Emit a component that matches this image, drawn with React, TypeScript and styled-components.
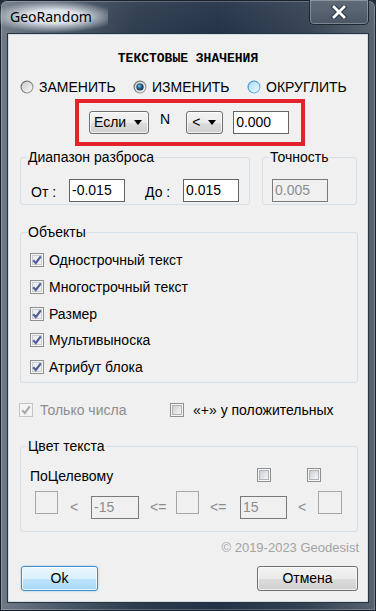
import React from "react";
import styled, { createGlobalStyle } from "styled-components";

const GlobalStyle = createGlobalStyle`
  html, body { margin: 0; padding: 0; background: #1f2b38; }
  body {
    width: 376px; height: 611px; overflow: hidden;
    font-family: "Liberation Sans", Arial, sans-serif;
  }
  * { box-sizing: border-box; }
`;

const Window = styled.div`
  width: 376px;
  height: 611px;
  display: flex;
  flex-direction: column;
  border-radius: 7px 7px 0 0;
  background:
    linear-gradient(180deg, rgba(255,255,255,0.06) 0%, rgba(0,0,0,0) 40px),
    linear-gradient(90deg, #6f7a86 0%, #4d5a69 16%, #2c3b4d 36%, #223146 58%, #344253 82%, #58636f 100%);
  box-shadow: inset 0 0 0 1px #18212c, inset 0 0 0 2px rgba(255,255,255,0.22);
`;

const TitleBar = styled.div`
  height: 34px;
  display: flex;
  align-items: flex-start;
  justify-content: space-between;
`;

const Title = styled.div`
  height: 32px;
  display: flex;
  align-items: center;
  padding: 0 16px 0 10px;
  font-family: "Noto Sans", "Open Sans", sans-serif;
  font-size: 14px;
  color: #000;
  background: radial-gradient(ellipse 60% 50% at 50% 52%, rgba(230,235,240,0.95) 40%, rgba(230,235,240,0) 100%);
`;

const CloseButton = styled.div`
  width: 60px;
  height: 25px;
  margin-right: 7px;
  display: flex;
  align-items: center;
  justify-content: center;
  border: 1px solid rgba(10, 16, 24, 0.75);
  border-top: none;
  border-radius: 0 0 5px 5px;
  background: linear-gradient(180deg, #5f6b78 0%, #56626f 50%, #4a5664 100%);
  box-shadow: inset 0 0 0 1px rgba(255,255,255,0.28);
`;

const Client = styled.div`
  margin: 0 8px 9px;
  height: 568px;
  background: #f0f0f0;
  border: 1px solid #d3dbe3;
  box-shadow: 0 0 0 1px #27323f;
  display: flex;
  flex-direction: column;
  color: #000;
  font-size: 14px;
`;

const Heading = styled.div`
  margin-top: 16px;
  line-height: 16px;
  text-align: center;
  font-family: "Liberation Mono", "DejaVu Sans Mono", monospace;
  font-weight: bold;
  font-size: 13px;
`;

const RadioRow = styled.div`
  margin-top: 11px;
  height: 18px;
  display: grid;
  grid-template-columns: 113px 114px auto;
  align-items: center;
  padding-left: 11px;
`;

const RadioItem = styled.label`
  display: flex;
  align-items: center;
  gap: 5px;
  line-height: 18px;
  white-space: nowrap;
`;

const Highlight = styled.div`
  margin: 3px 0 0 66px;
  width: 230px;
  height: 47px;
  border: 4px solid #e3222b;
  display: flex;
  align-items: center;
  padding-left: 10px;
`;

const ComboButton = styled.div<{ $w: number; $pl: number; $pr: number; $ml?: number }>`
  width: ${(p) => p.$w}px;
  height: 23px;
  margin-left: ${(p) => p.$ml ?? 0}px;
  padding: 0 ${(p) => p.$pr}px 1px ${(p) => p.$pl}px;
  display: flex;
  align-items: center;
  justify-content: space-between;
  border: 1px solid #707070;
  border-radius: 3px;
  background: linear-gradient(180deg, #f2f2f2 0%, #ebebeb 50%, #dddddd 50%, #cfcfcf 100%);
  box-shadow: inset 0 0 0 1px rgba(255,255,255,0.7);
  line-height: 16px;
`;

const Arrow = styled.span`
  width: 0;
  height: 0;
  border-left: 4px solid transparent;
  border-right: 4px solid transparent;
  border-top: 5px solid #000;
`;

const NLabel = styled.div`
  align-self: flex-start;
  margin: 8px 0 0 11px;
  line-height: 16px;
`;

const TextBox = styled.div<{ $w: number; $disabled?: boolean; $mt?: number; $ml?: number }>`
  width: ${(p) => p.$w}px;
  height: 23px;
  margin-top: ${(p) => p.$mt ?? 0}px;
  margin-left: ${(p) => p.$ml ?? 0}px;
  padding: 0 0 2px 2px;
  display: flex;
  align-items: center;
  border: 1px solid ${(p) => (p.$disabled ? "#7a7a7a" : "#646464")};
  background: ${(p) => (p.$disabled ? "#f0f0f0" : "#ffffff")};
  color: ${(p) => (p.$disabled ? "#8d8d8d" : "#000")};
  line-height: 16px;
`;

const GroupRow = styled.div`
  margin-top: 3px;
  display: flex;
  gap: 12px;
  padding-left: 11px;
`;

const Group = styled.fieldset<{ $w?: number; $mt?: number }>`
  margin: ${(p) => p.$mt ?? 0}px ${(p) => (p.$w ? 0 : 9)}px 0 ${(p) => (p.$w ? 0 : 11)}px;
  padding: 0;
  min-width: 0;
  ${(p) => (p.$w ? `width: ${p.$w}px;` : "")}
  border: 1px solid #d5dfe5;
  border-radius: 3px;
`;

const Legend = styled.legend`
  margin-left: 6px;
  padding: 0 1px;
  font-size: 14px;
  line-height: 16px;
`;

const FieldRow = styled.div<{ $pl: number }>`
  display: flex;
  align-items: center;
  padding: 14px 0 2px ${(p) => p.$pl}px;
`;

const FieldLabel = styled.span<{ $w: number; $ml?: number }>`
  width: ${(p) => p.$w}px;
  margin-left: ${(p) => p.$ml ?? 0}px;
  padding-top: 3px;
  line-height: 16px;
  white-space: pre;
`;

const CheckList = styled.div`
  padding: 7px 0 2px 9px;
`;

const CheckItem = styled.label<{ $gap: number; $h?: number; $disabled?: boolean; $w?: number }>`
  display: flex;
  align-items: center;
  gap: ${(p) => p.$gap}px;
  height: ${(p) => p.$h ?? 18}px;
  ${(p) => (p.$w ? `width: ${p.$w}px;` : "")}
  line-height: 16px;
  white-space: nowrap;
  color: ${(p) => (p.$disabled ? "#8d8d8d" : "#000")};
`;

const OptionsRow = styled.div`
  margin-top: 18px;
  height: 18px;
  display: flex;
  align-items: center;
  padding-left: 10px;
`;

const TargetRow = styled.div`
  margin-top: 12px;
  height: 18px;
  display: flex;
  align-items: center;
  gap: 36px;
  padding: 0 36px 0 9px;
`;

const TargetLabel = styled.span`
  flex: 1;
  line-height: 16px;
  padding-top: 2px;
`;

const RangeRow = styled.div`
  margin-top: 7px;
  display: flex;
  align-items: flex-start;
  padding: 0 0 12px 14px;
`;

const Swatch = styled.div<{ $w?: number }>`
  width: ${(p) => p.$w ?? 23}px;
  height: 23px;
  border: 1px solid #a6a6a6;
`;

const Sym = styled.span<{ $w: number; $pl: number }>`
  width: ${(p) => p.$w}px;
  padding-left: ${(p) => p.$pl}px;
  margin-top: 8px;
  line-height: 16px;
  color: #8d8d8d;
`;

const Copyright = styled.div`
  margin-top: 8px;
  padding-right: 8px;
  text-align: right;
  line-height: 16px;
  font-size: 13px;
  color: #a3a3a3;
`;

const ButtonRow = styled.div`
  margin-top: 10px;
  display: flex;
  justify-content: space-between;
  padding: 0 9px 0 12px;
`;

const Button = styled.div<{ $w: number; $primary?: boolean }>`
  width: ${(p) => p.$w}px;
  height: 25px;
  display: flex;
  align-items: center;
  justify-content: center;
  padding-bottom: 1px;
  border-radius: 3px;
  border: 1px solid ${(p) => (p.$primary ? "#3c8fcb" : "#707070")};
  background: ${(p) =>
    p.$primary
      ? "linear-gradient(180deg, #eaf6fd 0%, #d9f0fc 50%, #bee6fd 50%, #a7d9f5 100%)"
      : "linear-gradient(180deg, #f2f2f2 0%, #ebebeb 50%, #dddddd 50%, #cfcfcf 100%)"};
  box-shadow: ${(p) =>
    p.$primary
      ? "inset 0 0 0 1px rgba(255,255,255,0.75), 0 0 2px rgba(60,160,230,0.6)"
      : "inset 0 0 0 1px rgba(255,255,255,0.7)"};
  line-height: 16px;
`;

type RadioKind = "off" | "on" | "hover";

const Radio = ({ kind }: { kind: RadioKind }) => (
  <svg width="14" height="14" viewBox="0 0 14 14" style={{ flex: "none" }}>
    <defs>
      <linearGradient id={`rr-${kind}`} x1="0" y1="0" x2="1" y2="1">
        <stop offset="0" stopColor={kind === "hover" ? "#2f83c4" : "#555555"} />
        <stop offset="1" stopColor={kind === "hover" ? "#7fc1ea" : "#a9a9a9"} />
      </linearGradient>
      <linearGradient id={`rf-${kind}`} x1="0" y1="0" x2="1" y2="1">
        <stop offset="0" stopColor={kind === "hover" ? "#a9ddf8" : "#c9c9c9"} />
        <stop offset="1" stopColor={kind === "hover" ? "#eef9ff" : "#fbfbfb"} />
      </linearGradient>
      <radialGradient id="rdot" cx="0.5" cy="0.5" r="0.5" fx="0.35" fy="0.3">
        <stop offset="0" stopColor="#9fe0ff" />
        <stop offset="0.45" stopColor="#2a7cb4" />
        <stop offset="1" stopColor="#0b2640" />
      </radialGradient>
    </defs>
    <circle cx="7" cy="7" r="6.5" fill={`url(#rr-${kind})`} />
    <circle cx="7" cy="7" r="5.4" fill={`url(#rf-${kind})`} />
    {kind === "on" && <circle cx="7" cy="7" r="3.6" fill="url(#rdot)" />}
  </svg>
);

const Check = ({ checked, disabled }: { checked?: boolean; disabled?: boolean }) => (
  <svg width="14" height="14" viewBox="0 0 14 14" style={{ flex: "none" }}>
    <defs>
      <linearGradient id="cbIn" x1="0" y1="0" x2="1" y2="1">
        <stop offset="0" stopColor="#c8ccd2" />
        <stop offset="1" stopColor="#f8f8f8" />
      </linearGradient>
    </defs>
    <rect x="0.5" y="0.5" width="13" height="13" fill={disabled ? "#f4f4f4" : "#f6f6f6"} stroke={disabled ? "#c4c4c4" : "#8e8f8f"} />
    {!disabled && <rect x="2.5" y="2.5" width="9" height="9" fill={checked ? "#eeeeee" : "url(#cbIn)"} stroke={checked ? "#c9ccd0" : "#aeb3b9"} />}
    {checked && (
      <path
        d="M3.2 7.2 L5.8 10 L10.8 3.4"
        fill="none"
        stroke={disabled ? "#a9a9a9" : "#4b5f98"}
        strokeWidth="2.1"
        strokeLinejoin="miter"
      />
    )}
  </svg>
);

const CloseGlyph = () => (
  <svg width="16" height="14" viewBox="0 0 16 14">
    <path d="M3 2 L13 12 M13 2 L3 12" stroke="#2a3440" strokeWidth="4.6" strokeLinecap="square" />
    <path d="M3 2 L13 12 M13 2 L3 12" stroke="#ffffff" strokeWidth="2.8" strokeLinecap="square" />
  </svg>
);

const objects = ["Однострочный текст", "Многострочный текст", "Размер", "Мультивыноска", "Атрибут блока"];

export default function App() {
  return (
    <>
      <GlobalStyle />
      <Window>
        <TitleBar>
          <Title>GeoRandom</Title>
          <CloseButton>
            <CloseGlyph />
          </CloseButton>
        </TitleBar>
        <Client>
          <Heading>ТЕКСТОВЫЕ ЗНАЧЕНИЯ</Heading>
          <RadioRow>
            <RadioItem>
              <Radio kind="off" />
              ЗАМЕНИТЬ
            </RadioItem>
            <RadioItem>
              <Radio kind="on" />
              ИЗМЕНИТЬ
            </RadioItem>
            <RadioItem>
              <Radio kind="hover" />
              ОКРУГЛИТЬ
            </RadioItem>
          </RadioRow>

          <Highlight>
            <ComboButton $w={60} $pl={4} $pr={6}>
              Если
              <Arrow />
            </ComboButton>
            <NLabel>N</NLabel>
            <ComboButton $w={37} $pl={5} $pr={6} $ml={16}>
              &lt;
              <Arrow />
            </ComboButton>
            <TextBox $w={56} $ml={10}>0.000</TextBox>
          </Highlight>

          <GroupRow>
            <Group $w={230}>
              <Legend>Диапазон разброса</Legend>
              <FieldRow $pl={10}>
                <FieldLabel $w={38}>От :</FieldLabel>
                <TextBox $w={56}>-0.015</TextBox>
                <FieldLabel $w={38} $ml={20}>До :</FieldLabel>
                <TextBox $w={56}>0.015</TextBox>
              </FieldRow>
            </Group>
            <Group $w={95}>
              <Legend>Точность</Legend>
              <FieldRow $pl={9}>
                <TextBox $w={56} $disabled>0.005</TextBox>
              </FieldRow>
            </Group>
          </GroupRow>

          <Group $mt={19}>
            <Legend>Объекты</Legend>
            <CheckList>
              {objects.map((o) => (
                <CheckItem key={o} $gap={5} $h={26.7}>
                  <Check checked />
                  {o}
                </CheckItem>
              ))}
            </CheckList>
          </Group>

          <OptionsRow>
            <CheckItem $gap={7} $w={151} $disabled>
              <Check checked disabled />
              Только числа
            </CheckItem>
            <CheckItem $gap={9}>
              <Check />
              «+» у положительных
            </CheckItem>
          </OptionsRow>

          <Group $mt={19}>
            <Legend>Цвет текста</Legend>
            <TargetRow>
              <TargetLabel>ПоЦелевому</TargetLabel>
              <Check />
              <Check />
            </TargetRow>
            <RangeRow>
              <Swatch />
              <Sym $w={33} $pl={12}>&lt;</Sym>
              <TextBox $w={48} $disabled $mt={5}>-15</TextBox>
              <Sym $w={37} $pl={11}>&lt;=</Sym>
              <Swatch />
              <Sym $w={41} $pl={11}>&lt;=</Sym>
              <TextBox $w={47} $disabled $mt={5}>15</TextBox>
              <Sym $w={31} $pl={11}>&lt;</Sym>
              <Swatch $w={24} />
            </RangeRow>
          </Group>

          <Copyright>© 2019-2023 Geodesist</Copyright>

          <ButtonRow>
            <Button $w={77} $primary>Ok</Button>
            <Button $w={101}>Отмена</Button>
          </ButtonRow>
        </Client>
      </Window>
    </>
  );
}
